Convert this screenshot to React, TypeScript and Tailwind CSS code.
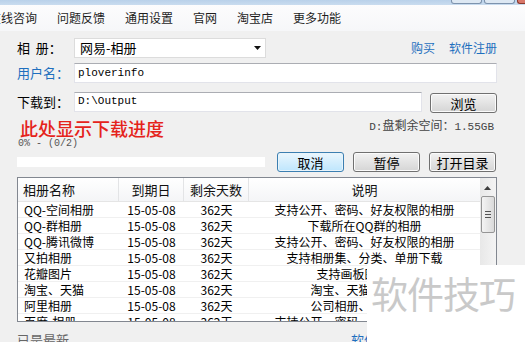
const menuItems = ["问题反馈", "通用设置", "官网", "淘宝店", "更多功能"];

const rows = [
  { name: "QQ-空间相册", desc: "支持公开、密码、好友权限的相册" },
  { name: "QQ-群相册", desc: "下载所在QQ群的相册" },
  { name: "QQ-腾讯微博", desc: "支持公开、密码、好友权限的相册" },
  { name: "又拍相册", desc: "支持相册集、分类、单册下载" },
  { name: "花瓣图片", desc: "支持画板图片下载" },
  { name: "淘宝、天猫", desc: "淘宝、天猫宝贝图片" },
  { name: "阿里相册", desc: "公司相册、整店下载" },
  { name: "百度-相册", desc: "支持公开、密码、好友权限的相册" },
];

const font = { fontFamily: '"SimSun", "Noto Sans CJK SC", sans-serif' };
const mono = { fontFamily: '"Liberation Mono", monospace' };

function WinButton({ label, focused }: { label: string; focused?: boolean }) {
  return (
    <button
      className={`h-[20px] w-[67px] rounded-[3px] border text-[13px] leading-none text-black ${
        focused
          ? "border-[#3c7fb1] bg-gradient-to-b from-[#eaf6fd] to-[#bee6fd] shadow-[inset_0_0_0_1px_#e8f4fb]"
          : "border-[#707070] bg-gradient-to-b from-[#f2f2f2] to-[#d5d5d5] shadow-[inset_0_0_0_1px_#fbfbfb]"
      }`}
    >
      {label}
    </button>
  );
}

export default function App() {
  return (
    <div
      className="relative w-[525px] h-[342px] overflow-hidden bg-[#f0f0f0] text-black"
      style={font}
    >
      {/* title bar remnant */}
      <div className="h-[5px] bg-gradient-to-b from-[#b9d1ea] to-[#c9dcef] flex justify-end">
        <div className="w-[31px] h-[4px] border border-t-0 border-[#7d93ad] rounded-b-[3px] bg-[#dde8f3] mr-[2px]" />
        <div className="w-[31px] h-[4px] border border-t-0 border-[#7d93ad] rounded-b-[3px] bg-[#dde8f3] mr-[2px]" />
        <div className="w-[8px] h-[4px] border border-t-0 border-r-0 border-[#8a3a2e] rounded-bl-[3px] bg-[#d9786a]" />
      </div>

      {/* menu bar */}
      <div className="h-[26px] bg-gradient-to-b from-[#fcfcfd] to-[#f6f7f9] flex items-center gap-[20px] text-[12px] text-[#1e1e1e]">
        <span className="ml-[-11px]">在线咨询</span>
        {menuItems.map((m) => (
          <span key={m}>{m}</span>
        ))}
      </div>

      <div className="pl-[17px] pr-[28px]">
        {/* album */}
        <div className="mt-[7px] flex items-center h-[20px]">
          <span className="w-[57px] text-[13px]">相&nbsp;&nbsp;册：</span>
          <div className="w-[192px] h-[20px] bg-white border border-[#dcdcdc] flex items-center pl-[5px] pr-[4px]">
            <span className="text-[13px] flex-1">网易-相册</span>
            <svg width="7" height="4" viewBox="0 0 7 4">
              <path d="M0 0 L7 0 L3.5 4 Z" fill="#111" />
            </svg>
          </div>
          <div className="ml-auto flex gap-[14px] text-[12px] text-[#1e6fbe]">
            <span>购买</span>
            <span>软件注册</span>
          </div>
        </div>

        {/* user */}
        <div className="mt-[5px] flex items-center h-[20px]">
          <span className="w-[57px] text-[13px] text-[#1e6fbe]">用户名：</span>
          <div className="flex-1 h-[20px] bg-white border border-[#e2e3ea] border-t-[#abadb3] flex items-center pl-[3px]">
            <span className="text-[11px]" style={mono}>
              ploverinfo
            </span>
          </div>
        </div>

        {/* path */}
        <div className="mt-[8px] flex items-center h-[21px]">
          <span className="w-[57px] text-[13px]">下载到：</span>
          <div className="w-[348px] h-[20px] bg-white border border-[#e2e3ea] border-t-[#abadb3] flex items-center pl-[3px]">
            <span className="text-[11px]" style={mono}>
              D:\Output
            </span>
          </div>
          <div className="ml-auto">
            <WinButton label="浏览" />
          </div>
        </div>

        {/* progress text */}
        <div className="mt-[6px] flex items-start">
          <div className="flex flex-col">
            <span className="text-[18px] leading-[20px] font-medium text-[#e5231b] ml-[3px]">此处显示下载进度</span>
            <span className="mt-[1px] ml-[1px] text-[10px] leading-[10px] text-[#555]" style={mono}>
              0% - (0/2)
            </span>
          </div>
          <span className="ml-auto mt-[1px] mr-[3px] text-[12px] leading-[12px] text-[#444]">
            <span style={mono} className="text-[11px]">D:</span>盘剩余空间：
            <span style={mono} className="text-[11px]">1.55GB</span>
          </span>
        </div>

        {/* progress bar + buttons */}
        <div className="mt-[3px] flex items-center h-[20px]">
          <div className="w-[248px] h-[10px] bg-white" />
          <div className="ml-[12px] flex gap-[9px]">
            <WinButton label="取消" focused />
            <WinButton label="暂停" />
            <WinButton label="打开目录" />
          </div>
        </div>

        {/* list */}
        <div className="mt-[5px] h-[145px] border border-[#828790] bg-white flex overflow-hidden">
          <div className="flex-1 flex flex-col">
            <div className="h-[24px] flex bg-gradient-to-b from-white to-[#f4f5f7] border-b border-[#e5e5e5] text-[13px] text-[#111] shrink-0">
              <div className="w-[101px] pl-[5px] flex items-center border-r border-[#e3e4e6]">相册名称</div>
              <div className="w-[65px] flex items-center justify-center border-r border-[#e3e4e6]">到期日</div>
              <div className="w-[65px] flex items-center justify-center border-r border-[#e3e4e6]">剩余天数</div>
              <div className="flex-1 flex items-center justify-center">说明</div>
            </div>
            {rows.map((r) => (
              <div key={r.name} className="h-[16px] flex text-[12px] leading-[16px] border-b border-[#f0f0f0] shrink-0">
                <div className="w-[101px] pl-[6px] whitespace-nowrap">{r.name}</div>
                <div className="w-[65px] text-center">15-05-08</div>
                <div className="w-[65px] text-center">362天</div>
                <div className="flex-1 text-center whitespace-nowrap">{r.desc}</div>
              </div>
            ))}
          </div>
          {/* scrollbar */}
          <div className="w-[16px] h-full bg-gradient-to-r from-[#e8e8e8] to-[#f4f4f4] flex flex-col items-center pr-[1px]">
            <div className="h-[18px] w-full flex items-center justify-center pt-[1px]">
              <svg width="7" height="4" viewBox="0 0 7 4">
                <path d="M0 4 L3.5 0 L7 4 Z" fill="#3c3c3c" />
              </svg>
            </div>
            <div className="w-[14px] h-[37px] rounded-[2px] border border-[#959595] bg-gradient-to-r from-[#f4f4f4] to-[#dadada] flex flex-col items-center justify-center gap-[2px]">
              <div className="w-[6px] h-[1px] bg-[#555]" />
              <div className="w-[6px] h-[1px] bg-[#555]" />
              <div className="w-[6px] h-[1px] bg-[#555]" />
            </div>
          </div>
        </div>

        {/* status */}
        <div className="mt-[10px] flex text-[13px] leading-[16px]">
          <span className="text-[#666]">已是最新</span>
          <span className="ml-[282px] text-[#1e6fbe]">软件更新</span>
        </div>
      </div>

      {/* watermark overlay */}
      <div className="absolute left-[367px] top-[265px] right-0 bottom-0 bg-white pl-[4px]">
        <span
          className="text-[37px] leading-[56px] text-[#c9c9c9] tracking-[-1px] whitespace-nowrap"
          style={{ fontFamily: '"Noto Sans CJK SC", sans-serif' }}
        >
          软件技巧
        </span>
      </div>
    </div>
  );
}
